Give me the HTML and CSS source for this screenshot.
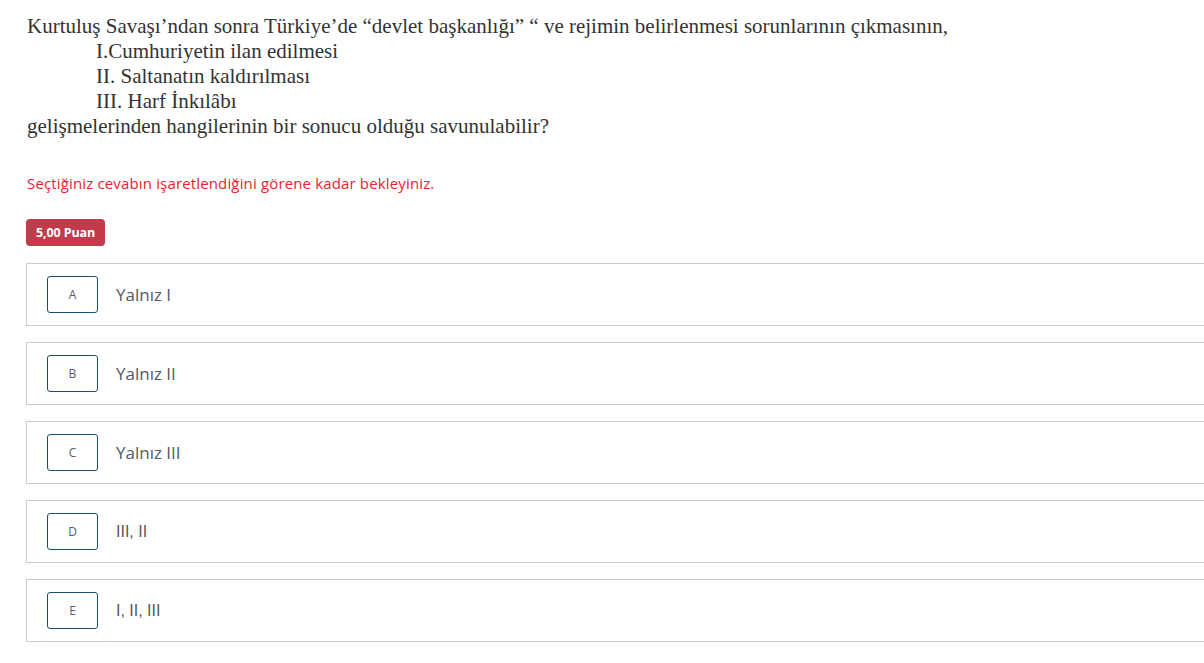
FILE: index.html
```html
<!DOCTYPE html>
<html lang="tr">
<head>
<meta charset="utf-8">
<link rel="stylesheet" href="styles.css">
</head>
<body>
<div class="page">
  <div class="question">
    <p>Kurtuluş Savaşı’ndan sonra Türkiye’de “devlet başkanlığı” “ ve rejimin belirlenmesi sorunlarının çıkmasının,</p>
    <p class="item">I.Cumhuriyetin ilan edilmesi</p>
    <p class="item">II. Saltanatın kaldırılması</p>
    <p class="item">III. Harf İnkılâbı</p>
    <p>gelişmelerinden hangilerinin bir sonucu olduğu savunulabilir?</p>
  </div>
  <div class="warning">Seçtiğiniz cevabın işaretlendiğini görene kadar bekleyiniz.</div>
  <div class="badge">5,00 Puan</div>
  <div class="options">
    <div class="option"><span class="letter">A</span><span class="text">Yalnız I</span></div>
    <div class="option"><span class="letter">B</span><span class="text">Yalnız II</span></div>
    <div class="option"><span class="letter">C</span><span class="text">Yalnız III</span></div>
    <div class="option"><span class="letter">D</span><span class="text alt">III, II</span></div>
    <div class="option"><span class="letter">E</span><span class="text alt">I, II, III</span></div>
  </div>
</div>
</body>
</html>
```
FILE: styles.css
```css
html, body {
  margin: 0;
  padding: 0;
  background: #ffffff;
  overflow: hidden;
}
.page {
  padding: 14px 0 0 26px;
  width: 1200px;
  font-family: "Open Sans", sans-serif;
}
.question {
  font-family: "Liberation Serif", "Times New Roman", serif;
  font-size: 21px;
  line-height: 25px;
  color: #333333;
  padding-left: 1px;
}
.question p {
  margin: 0;
}
.question .item {
  padding-left: 69px;
}
.warning {
  margin-top: 34px;
  font-family: "Open Sans", sans-serif;
  font-size: 15px;
  line-height: 20px;
  color: #e3262f;
  padding-left: 1px;
  letter-spacing: 0.15px;
}
.badge {
  display: inline-block;
  margin-top: 26px;
  background: #c13b4b;
  color: #ffffff;
  font-family: "Open Sans", sans-serif;
  font-weight: 700;
  font-size: 12.5px;
  line-height: 27px;
  padding: 0 10px;
  border-radius: 4px;
  letter-spacing: -0.1px;
}
.options {
  margin-top: 17px;
  display: flex;
  flex-direction: column;
  gap: 16px;
}
.option {
  height: 61px;
  border: 1px solid #cccccc;
  display: flex;
  align-items: center;
  padding-left: 20px;
}
.letter {
  width: 49px;
  height: 35px;
  border: 1px solid #1f4e6a;
  border-radius: 3px;
  display: flex;
  align-items: center;
  justify-content: center;
  font-family: "Open Sans", sans-serif;
  font-size: 12px;
  color: #555e66;
}
.text {
  margin-left: 18px;
  font-family: "Open Sans", sans-serif;
  font-size: 17px;
  color: #555a60;
}
.text.alt {
  font-family: "Liberation Sans", Arial, sans-serif;
  font-size: 16px;
}
```
